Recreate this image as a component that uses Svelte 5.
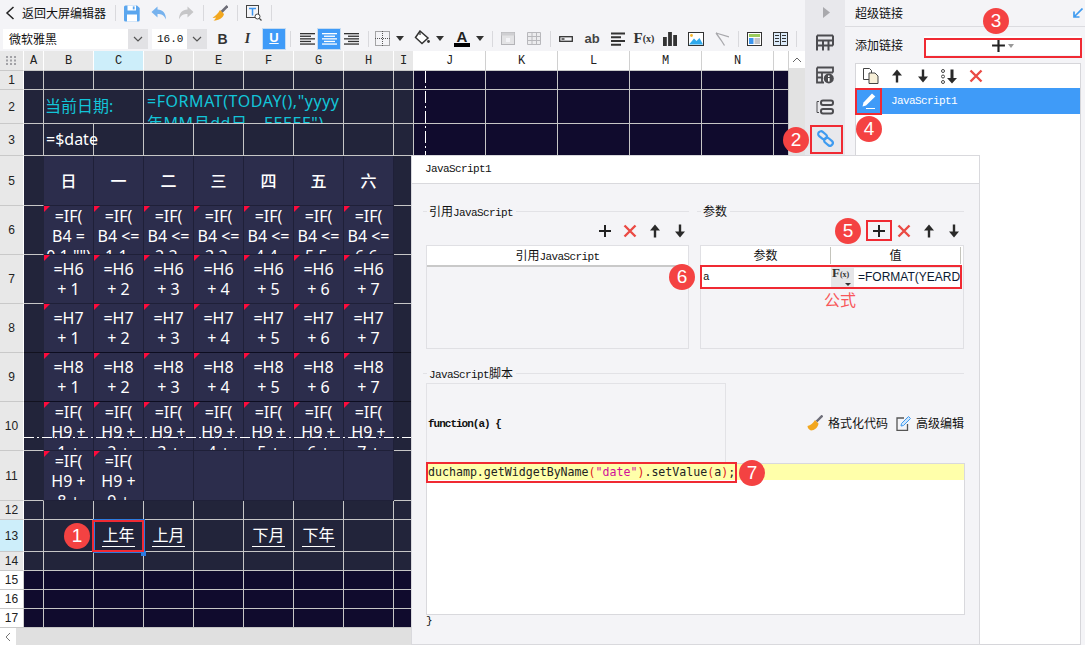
<script lang="ts">
	const colNames = ['A', 'B', 'C', 'D', 'E', 'F', 'G', 'H', 'I', 'J', 'K', 'L', 'M', 'N', ''];
	const rowNames = [1, 2, 3, 5, 6, 7, 8, 9, 10, 11, 12, 13, 14, 15, 16, 17];
	const weekdays = ['日', '一', '二', '三', '四', '五', '六'];
	const bottomLinks: Record<number, string> = { 2: '上年', 3: '上月', 5: '下月', 6: '下年' };

	type Cell = { key: string; cls: string; lines: string[]; mark: boolean };

	function calLines(row: number, k: number): string[] {
		if (row === 5) return [weekdays[k - 1]];
		if (row === 6) return k === 1 ? ['=IF(', 'B4 =', '0,1,"")'] : ['=IF(', 'B4 <=', `${k - 1},${k - 1},`];
		if (row === 7) return ['=H6', `+ ${k}`];
		if (row === 8) return ['=H7', `+ ${k}`];
		if (row === 9) return ['=H8', `+ ${k}`];
		if (row === 10) return ['=IF(', 'H9 +', `${k} +`];
		if (k <= 2) return ['=IF(', 'H9 +', `${k + 7} +`];
		return [];
	}

	function rowCells(row: number): Cell[] {
		const out: Cell[] = [];
		for (let i = 0; i < 15; i++) {
			const key = `${row}-${i}`;
			if (row === 2 && (i === 2 || (i >= 4 && i <= 6))) continue;
			let cls = i >= 9 || row >= 15 ? 'cell deep' : 'cell';
			let lines: string[] = [];
			let mark = false;
			if (row === 2 && i === 1) {
				cls += ' span2 cyan label';
				lines = ['当前日期:'];
			} else if (row === 2 && i === 3) {
				cls += ' span4 cyan formula';
				lines = ['=FORMAT(TODAY(),"yyyy', '年MM月dd日，EEEEE")'];
			} else if (row === 3 && i === 1) {
				cls += ' date';
				lines = ['=$date'];
			} else if (row >= 5 && row <= 11 && i >= 1 && i <= 7) {
				lines = calLines(row, i);
				mark = row > 5 && lines.length > 0;
				cls += ' cal';
				if (row === 5) cls += ' weekday';
				if (row === 8 || row === 9) cls += ' heavy';
				if (lines.length === 3) cls += ' top';
			} else if (row >= 5 && row <= 11 && (i === 0 || i === 8)) {
				cls += row === 8 || row === 9 ? ' side dim' : ' side';
			} else if (row === 13 && bottomLinks[i]) {
				cls += ' link';
				lines = [bottomLinks[i]];
			}
			out.push({ key, cls, lines, mark });
		}
		return out;
	}

	const redBoxes = [
		{ x: 92, y: 520, w: 52, h: 32 },
		{ x: 810, y: 125, w: 33, h: 29 },
		{ x: 924, y: 38, w: 158, h: 20 },
		{ x: 855, y: 88, w: 27, h: 27 },
		{ x: 866, y: 220, w: 26, h: 21 },
		{ x: 700, y: 265, w: 262, h: 24 },
		{ x: 426, y: 462, w: 311, h: 21 }
	];

	const badges = [
		{ n: 1, x: 77, y: 536 },
		{ n: 2, x: 796, y: 140 },
		{ n: 3, x: 996, y: 21 },
		{ n: 4, x: 869, y: 129 },
		{ n: 5, x: 848, y: 231 },
		{ n: 6, x: 682, y: 277 },
		{ n: 7, x: 752, y: 473 }
	];
</script>

{#snippet plus(s = 14)}
	<svg width={s} height={s} viewBox="0 0 14 14"><path d="M7 1v12M1 7h12" stroke="#222" stroke-width="2" /></svg>
{/snippet}

{#snippet cross()}
	<svg width="14" height="14" viewBox="0 0 14 14"><path d="M1.5 1.5l11 11M12.5 1.5l-11 11" stroke="#ea4a44" stroke-width="2.4" /></svg>
{/snippet}

{#snippet up()}
	<svg width="12" height="14" viewBox="0 0 12 14"><path d="M6 0.5L11 6.5H7.2V13.5H4.8V6.5H1Z" fill="#2a2a2a" /></svg>
{/snippet}

{#snippet down()}
	<svg width="12" height="14" viewBox="0 0 12 14"><path d="M6 13.5L11 7.5H7.2V0.5H4.8V7.5H1Z" fill="#2a2a2a" /></svg>
{/snippet}

{#snippet caret()}
	<svg width="8" height="5" viewBox="0 0 8 5"><path d="M0 0h8L4 5Z" fill="#333" /></svg>
{/snippet}

{#snippet chevron()}
	<svg width="10" height="6" viewBox="0 0 10 6"><path d="M1 1l4 4 4-4" fill="none" stroke="#555" stroke-width="1.2" /></svg>
{/snippet}

<div class="app">
	<div class="main">
		<div class="bar-top">
			<svg class="back" width="10" height="14" viewBox="0 0 10 14"><path d="M8.5 1L2 7l6.5 6" fill="none" stroke="#222" stroke-width="1.5" /></svg>
			<span class="back-label">返回大屏编辑器</span>
			<i class="sep"></i>
			<div class="top-group">
				<svg width="16" height="17" viewBox="0 0 16 17"><path d="M1.5 0.5H13L15.7 3V15a1.5 1.5 0 0 1-1.5 1.5H1.5A1.5 1.5 0 0 1 0 15V2A1.5 1.5 0 0 1 1.5 0.5Z" fill="#5ba6ee" /><rect x="3.5" y="0.5" width="8.5" height="5" fill="#fff" /><rect x="8.8" y="1.4" width="1.8" height="3" fill="#5ba6ee" /><rect x="3" y="9.5" width="10" height="7" fill="#fff" /></svg>
				<svg width="16" height="14" viewBox="0 0 16 14"><path d="M6.5 0.5L0.5 6l6 5.5V8c4 0 6.500 1 8.500 5.500C15 7 11.500 3.500 6.500 3.500Z" fill="#76b2ee" /></svg>
				<svg width="16" height="14" viewBox="0 0 16 14"><path d="M9.500 0.500L15.500 6l-6 5.500V8c-4 0-6.500 1-8.500 5.500C1 7 4.500 3.500 9.500 3.500Z" fill="#c6c6c8" /></svg>
			</div>
			<i class="sep"></i>
			<svg width="16" height="16" viewBox="0 0 16 16"><path d="M15.500 1L9.500 7" stroke="#6d6d78" stroke-width="2.600" /><path d="M8 5L12 9C11 13 7 15.500 1.500 15.500 3 14.500 4 13 4 12.500 3 13 1.500 13 0.500 12.800 3.500 11 6 8.500 8 5Z" fill="#f2a71f" /></svg>
			<i class="sep"></i>
			<svg width="16" height="16" viewBox="0 0 16 16"><rect x="0.500" y="0.500" width="12" height="12" fill="none" stroke="#444" /><path d="M3 3.500h7M6.500 3.500v7" stroke="#3d95ee" stroke-width="1.500" /><circle cx="11.500" cy="11.500" r="2.500" fill="#fff" stroke="#444" /><path d="M13.300 13.300L15.500 15.500" stroke="#444" stroke-width="1.200" /></svg>
			<i class="sep"></i>
		</div>

		<div class="bar-format">
			<div class="select font-select"><span class="value">微软雅黑</span><span class="drop">{@render chevron()}</span></div>
			<div class="select size-select"><span class="value mono">16.0</span><span class="drop">{@render chevron()}</span></div>
			<span class="slot b-slot">B</span>
			<span class="slot i-slot">I</span>
			<span class="u-slot">U</span>
			<i class="sep sep-a"></i>
			{#each [0, 1, 2] as a}
				<span class="align" class:on={a === 1}>
					<svg width="15" height="12" viewBox="0 0 15 12">
						{#each [0, 1, 2, 3, 4] as l}
							{@const w = l % 2 ? 11 : 15}
							<rect x={a === 0 ? 0 : a === 1 ? (15 - w) / 2 : 15 - w} y={l * 2.6} width={w} height="1.300" fill={a === 1 ? '#fff' : '#333'} />
						{/each}
					</svg>
				</span>
			{/each}
			<i class="sep sep-b"></i>
			<span class="tool-slot">
				<svg width="15" height="15" viewBox="0 0 15 15"><rect x="0.500" y="0.500" width="14" height="14" fill="none" stroke="#555" stroke-dasharray="1 1" /><path d="M7.500 0v15M0 7.500h15" stroke="#555" stroke-dasharray="1 1" /></svg>
			</span>
			<span class="caret-slot">{@render caret()}</span>
			<span class="tool-slot gap">
				<svg width="16" height="17" viewBox="0 0 16 17"><path d="M6 1L14 8 8 13.500 1.500 7.500Z" fill="#fff" stroke="#333" stroke-width="1.500" /><path d="M6 1v4" stroke="#333" stroke-width="1.200" /><circle cx="14.500" cy="11.500" r="1.400" fill="#333" /></svg>
			</span>
			<span class="caret-slot">{@render caret()}</span>
			<span class="tool-slot gap font-color">
				<span class="a-letter">A</span>
				<span class="a-bar"></span>
			</span>
			<span class="caret-slot">{@render caret()}</span>
			<i class="sep sep-c"></i>
			<span class="wide-slot">
				<svg width="14" height="13" viewBox="0 0 14 13"><rect x="0.500" y="0.500" width="13" height="12" fill="#e3e3e5" stroke="#b4b4b8" /><rect x="0.500" y="0.500" width="13" height="3" fill="#cfcfd2" /><rect x="5" y="6" width="4" height="4" fill="#f4f4f7" /></svg>
			</span>
			<span class="wide-slot">
				<svg width="14" height="13" viewBox="0 0 14 13"><path d="M0.500 0.500h13v12h-13zM0.500 4.500h13M0.500 8.500h13M5 0.500v12M9.500 0.500v12" fill="#ececee" stroke="#b8b8bc" /></svg>
			</span>
			<i class="sep sep-d"></i>
			<span class="wide-slot">
				<svg width="14" height="6" viewBox="0 0 14 6"><rect x="0.700" y="0.700" width="12.600" height="4.600" fill="none" stroke="#333" stroke-width="1.300" /><rect x="2.500" y="2.300" width="3" height="1.400" fill="#333" /></svg>
			</span>
			<span class="wide-slot ab">ab</span>
			<span class="wide-slot">
				<svg width="14" height="14" viewBox="0 0 14 14"><path d="M0 1.500h14M0 5.300h10M0 9h14M0 12.700h10" stroke="#333" stroke-width="1.900" /></svg>
			</span>
			<span class="wide-slot fx">F<small>(x)</small></span>
			<span class="wide-slot">
				<svg width="14" height="14" viewBox="0 0 14 14"><path d="M0 5h3.800v9H0zM5.100 0h3.800v14H5.100zM10.200 3H14v11h-3.800z" fill="#333" /></svg>
			</span>
			<span class="wide-slot">
				<svg width="16" height="14" viewBox="0 0 16 14"><rect x="0.500" y="0.500" width="15" height="13" fill="#fff" stroke="#333" /><path d="M1 12.500L6 6.500l2.500 2.500 3-3L15 12.500Z" fill="#2ea9ec" /><circle cx="3.500" cy="3.500" r="1.400" fill="#f5b52c" /></svg>
			</span>
			<span class="wide-slot">
				<svg width="14" height="14" viewBox="0 0 14 14"><path d="M1 1L14 5M1 1L6 8L9.500 13.500" fill="none" stroke="#a8a8ac" stroke-width="1.300" /></svg>
			</span>
			<i class="sep sep-d"></i>
			<span class="wide-slot">
				<svg width="15" height="14" viewBox="0 0 15 14"><rect x="0.500" y="0.500" width="14" height="13" fill="#fff" stroke="#333" /><rect x="2" y="2" width="11" height="3" fill="#9ccb5c" /><rect x="2" y="6" width="4.500" height="6" fill="#3d95ee" /><rect x="7.500" y="6" width="5.500" height="6" fill="#c4c4c8" /></svg>
			</span>
			<span class="wide-slot">
				<svg width="15" height="14" viewBox="0 0 15 14"><rect x="0.500" y="0.500" width="14" height="13" fill="#dcebfa" stroke="#333" /><path d="M7.500 0.500v13M2 3.500h4M2 6.500h4M2 9.500h4M9 3.500h4M9 6.500h4M9 9.500h4" stroke="#333" /></svg>
			</span>
			<i class="sep sep-d"></i>
		</div>

		<div class="sheet-wrap">
			<div class="sheet">
				<div class="corner">
					<svg width="11" height="9" viewBox="0 0 11 9">
						{#each [0, 4, 8] as x}
							{#each [0, 3.500, 7] as y}
								<rect {x} {y} width="2" height="2" fill="#a2a2a6" />
							{/each}
						{/each}
					</svg>
				</div>
				{#each colNames as name, i}
					<div class="col-head" class:white={i >= 9} class:picked={name === 'C'}>{name}</div>
				{/each}

				{#each rowNames as row}
					<div class="row-head" class:white={row >= 15} class:picked={row === 13}>{row}</div>
					{#each rowCells(row) as cell (cell.key)}
						<div class={cell.cls}>
							{#if cell.mark}<i class="mark"></i>{/if}
							{#if cell.cls.includes('link')}
								<span class="link-text">{cell.lines[0]}</span>
							{:else}
								{#each cell.lines as line}
									<span class="line">{line}</span>
								{/each}
							{/if}
						</div>
					{/each}
				{/each}
			</div>
			<div class="vscroll"><span class="vscroll-up"><svg width="10" height="6" viewBox="0 0 10 6"><path d="M1 5l4-4 4 4" fill="none" stroke="#666" /></svg></span></div>
		</div>

		<div class="hscroll">
			<span class="hscroll-left"><svg width="6" height="10" viewBox="0 0 6 10"><path d="M5 1L1 5l4 4" fill="none" stroke="#777" /></svg></span>
		</div>
	</div>

	<aside class="rail">
		<svg class="rail-arrow" width="7" height="11" viewBox="0 0 7 11"><path d="M0 0l7 5.500L0 11Z" fill="#a9a9ad" /></svg>
		<svg class="rail-icon" width="18" height="18" viewBox="0 0 18 18"><path d="M1 1.500h16M1 1.500v15M1 6.500h16M1 11.500h16M7 6.500v10M12.500 6.500v10M17 1.500v10" fill="none" stroke="#4c4c50" stroke-width="2" /></svg>
		<svg class="rail-icon tight" width="18" height="18" viewBox="0 0 18 18"><path d="M1 1.500h16v5M1 1.500v15h7M1 6.500h16M1 11.500h6M6 6.500v10" fill="none" stroke="#4c4c50" stroke-width="1.800" /><circle cx="12.800" cy="12.500" r="5" fill="#4c4c50" /><rect x="12" y="12" width="1.600" height="3.500" fill="#fff" /><rect x="12" y="9.500" width="1.600" height="1.500" fill="#fff" /></svg>
		<svg class="rail-icon" width="18" height="16" viewBox="0 0 18 16"><path d="M3 2.500H1v11h2" fill="none" stroke="#4c4c50" /><rect x="5" y="1.500" width="12" height="4.500" rx="2" fill="none" stroke="#4c4c50" stroke-width="2" /><rect x="5" y="10" width="12" height="4.500" rx="2" fill="none" stroke="#4c4c50" stroke-width="2" /></svg>
		<svg class="rail-icon" width="17" height="17" viewBox="0 0 17 17"><rect x="0.800" y="2.500" width="9.500" height="5.500" rx="2.700" transform="rotate(40 5.500 5.200)" fill="none" stroke="#3f9bf0" stroke-width="2.200" /><rect x="6.700" y="9" width="9.500" height="5.500" rx="2.700" transform="rotate(40 11.500 11.700)" fill="none" stroke="#3f9bf0" stroke-width="2.200" /></svg>
	</aside>

	<aside class="panel">
		<header class="panel-head">
			<span>超级链接</span>
			<svg width="10" height="10" viewBox="0 0 10 10"><path d="M9.500 0.500L1.500 8.500M1 3.500v5.500h5.500" fill="none" stroke="#3f9bf0" stroke-width="1.700" /></svg>
		</header>
		<div class="add-row">
			<span class="add-label">添加链接</span>
			<div class="add-btn">
				{@render plus(15)}
				<svg width="6" height="4" viewBox="0 0 6 4"><path d="M0 0h6L3 4Z" fill="#999" /></svg>
			</div>
		</div>
		<div class="link-list">
			<div class="list-tools">
				<svg width="16" height="16" viewBox="0 0 16 16"><path d="M0.500 0.500h6l2 2v9h-8z" fill="#fff" stroke="#444" /><path d="M6 5h6l3 3v7.500H6z" fill="#f8f0d8" stroke="#444" /></svg>
				{@render up()}
				<span class="down-gap">{@render down()}</span>
				<svg width="16" height="15" viewBox="0 0 16 15"><path d="M11 14.500L16 9h-3.500V0.500h-3V9H6Z" fill="#2a2a2a" /><circle cx="2" cy="2" r="1.500" fill="none" stroke="#444" /><circle cx="2" cy="7.500" r="1.500" fill="none" stroke="#444" /><circle cx="2" cy="13" r="1.500" fill="none" stroke="#444" /></svg>
				{@render cross()}
			</div>
			<div class="list-row">
				<span class="pen">
					<svg width="15" height="16" viewBox="0 0 15 16"><path d="M11 0.500L14.300 3.500 5 12.500 1.500 13.500 2.500 9.500Z" fill="#fff" /><path d="M5 15.500h9" stroke="#fff" /></svg>
				</span>
				<span class="mono list-name">JavaScript1</span>
			</div>
		</div>
	</aside>

	<section class="dialog">
		<div class="dialog-title mono">JavaScript1</div>
		<div class="dialog-body">
			<div class="two-cols">
				<div>
					<div class="legend"><span>引用<b class="mono">JavaScript</b></span></div>
					<div class="mini-tools left-tools">
						<span>{@render plus()}</span><span>{@render cross()}</span><span>{@render up()}</span><span>{@render down()}</span>
					</div>
					<div class="grid-box">
						<div class="grid-head ref-head"><span>引用<b class="mono">JavaScript</b></span></div>
					</div>
				</div>
				<div>
					<div class="legend"><span>参数</span></div>
					<div class="mini-tools right-tools">
						<span>{@render plus()}</span><span>{@render cross()}</span><span>{@render up()}</span><span>{@render down()}</span>
					</div>
					<div class="grid-box">
						<div class="grid-head params-head"><span>参数</span><span>值</span></div>
						<div class="param-row">
							<span class="param-name">a</span>
							<span class="param-fx">F<small>(x)</small><svg width="6" height="3" viewBox="0 0 6 3"><path d="M0 0h6L3 3Z" fill="#333" /></svg></span>
							<span class="param-value">=FORMAT(YEARD</span>
						</div>
						<p class="formula-note">公式</p>
					</div>
				</div>
			</div>

			<div class="legend script-legend"><span><b class="mono">JavaScript</b>脚本</span></div>
			<div class="script-top">
				<div class="fn-box mono">function(a) {'{'}</div>
				<div class="script-actions">
					<svg width="16" height="16" viewBox="0 0 16 16"><path d="M15.500 0.500L9.500 6.500" stroke="#6d6d78" stroke-width="2.400" /><path d="M8 5L11.500 8.500C11 12.500 7.500 15.500 4 15.500 2 15 0.500 13 0.500 11 3.500 10.500 6 8 8 5Z" fill="#f2a71f" /></svg>
					<span>格式化代码</span>
					<svg class="edit-icon" width="15" height="15" viewBox="0 0 15 15"><path d="M8 2H1v12.500h10.500V8" fill="none" stroke="#555" stroke-width="1.300" /><path d="M12.500 0.500L14.500 2.500 7.500 9.500 5 10l.5-2.500Z" fill="#cfe5fb" stroke="#3f9bf0" /></svg>
					<span>高级编辑</span>
				</div>
			</div>
			<div class="editor">
				<div class="code-line"><span>duchamp.getWidgetByName</span><span class="red">(</span><span class="pink">"date"</span><span class="red">)</span><span>.setValue</span><span class="red">(</span><span>a</span><span class="red">)</span><span>;</span><i class="cursor"></i></div>
			</div>
			<div class="closing mono">{'}'}</div>
		</div>
	</section>

	<svg class="dash-layer" width="1085" height="645">
		<path d="M425.500 71V155" stroke="#fff" stroke-dasharray="12 3 2 3" />
		<path d="M24 437.500H411" stroke="#fff" stroke-dasharray="10 3 2 3" />
	</svg>

	<i class="selection"></i>
	<i class="selection-handle"></i>

	{#each redBoxes as b}
		<i class="red-box" style="left:{b.x}px;top:{b.y}px;width:{b.w}px;height:{b.h}px"></i>
	{/each}
	{#each badges as b}
		<b class="badge" style="left:{b.x - 13}px;top:{b.y - 13}px">{b.n}</b>
	{/each}
</div>

<style>
	:global(body) {
		margin: 0;
		background: #fff;
	}

	.app {
		position: relative;
		display: flex;
		width: 1085px;
		height: 645px;
		overflow: hidden;
		background: #f4f4f7;
		color: #111;
		font-family: 'Noto Sans', 'Noto Sans CJK SC', sans-serif;
		font-size: 12px;
	}

	.mono {
		font-family: 'Liberation Mono', 'Noto Sans CJK SC', monospace;
		font-size: 11px;
		letter-spacing: -0.6px;
		font-weight: 400;
	}

	.main {
		display: flex;
		flex-direction: column;
		flex: 0 0 805px;
		width: 805px;
		height: 645px;
	}

	.sep {
		flex: none;
		width: 1px;
		height: 16px;
		background: #d9d9dd;
		margin: 0 8px 0 9px;
	}

	.bar-top {
		display: flex;
		align-items: center;
		height: 26px;
		padding-left: 5px;
	}

	.back {
		flex: none;
	}

	.back-label {
		margin-left: 7px;
		width: 84px;
		font-size: 12px;
		white-space: nowrap;
	}

	.top-group {
		display: flex;
		align-items: center;
		gap: 11px;
	}

	.bar-format {
		display: flex;
		align-items: center;
		height: 25px;
		padding-left: 3px;
	}

	.select {
		display: flex;
		flex: none;
		height: 20px;
		background: #e2e2e5;
	}

	.select .value {
		display: flex;
		align-items: center;
		background: #fff;
		padding-left: 6px;
		box-sizing: border-box;
	}

	.select .drop {
		display: flex;
		flex: 1;
		align-items: center;
		justify-content: center;
	}

	.font-select {
		width: 145px;
	}

	.font-select .value {
		width: 125px;
		font-size: 12px;
	}

	.size-select {
		width: 55px;
		margin-left: 4px;
	}

	.size-select .value {
		width: 35px;
		padding-left: 5px;
		font-size: 11px;
		letter-spacing: 0;
	}

	.slot {
		flex: none;
		width: 25px;
		text-align: center;
		font-family: 'Liberation Serif', serif;
		font-size: 14px;
		font-weight: 700;
		color: #333;
	}

	.b-slot {
		margin-left: 3px;
		font-family: 'Liberation Sans', sans-serif;
	}

	.i-slot {
		font-style: italic;
	}

	.u-slot {
		flex: none;
		width: 22px;
		height: 20px;
		margin-left: 3px;
		background: #3f9bf8;
		color: #fff;
		text-align: center;
		font: 700 13px/18px 'Liberation Sans', sans-serif;
		text-decoration: underline;
		outline: 1px solid #c6dcf2;
	}

	.sep-a {
		margin: 0 5px;
	}

	.sep-b {
		margin: 0 0 0 6px;
	}

	.sep-c {
		margin: 0 2px 0 7px;
	}

	.sep-d {
		margin: 0 2px 0 3px;
	}

	.align {
		display: flex;
		flex: none;
		width: 22px;
		height: 20px;
		align-items: center;
		justify-content: center;
	}

	.align.on {
		background: #3f9bf8;
		outline: 1px solid #c6dcf2;
	}

	.tool-slot {
		position: relative;
		display: flex;
		flex: none;
		width: 26px;
		height: 22px;
		align-items: center;
		justify-content: center;
	}

	.tool-slot.gap {
		margin-left: 4px;
	}

	.caret-slot {
		display: flex;
		flex: none;
		width: 10px;
		justify-content: center;
	}

	.font-color {
		flex-direction: column;
	}

	.a-letter {
		font: 700 15px/13px 'Liberation Sans', sans-serif;
		color: #222;
	}

	.a-bar {
		width: 16px;
		height: 4px;
		background: #000;
	}

	.wide-slot {
		display: flex;
		flex: none;
		width: 26px;
		align-items: center;
		justify-content: center;
	}

	.ab {
		font: 700 13px 'Liberation Sans', sans-serif;
		color: #444;
	}

	.fx {
		font: 700 15px 'Liberation Serif', serif;
		color: #333;
	}

	.fx small {
		font-size: 10px;
	}

	.sheet-wrap {
		display: flex;
		height: 577px;
	}

	.sheet {
		display: grid;
		flex: 0 0 789px;
		grid-template-columns: 24px 20px repeat(7, 50px) 20px repeat(5, 72px) 15px;
		grid-template-rows: 20px 19px 34px 32px 50px 49px 49px 49px 49px 49px 50px 19px 32px 19px 19px 19px 19px;
	}

	.corner,
	.col-head,
	.row-head {
		display: flex;
		align-items: center;
		justify-content: center;
		box-sizing: border-box;
		background: #e8e8e8;
		color: #222;
		border-right: 1px solid #fff;
		border-bottom: 1px solid #c9c9c9;
	}

	.col-head {
		font: 12px 'Liberation Mono', monospace;
	}

	.row-head {
		font: 12px 'Liberation Sans', sans-serif;
	}

	.white {
		background: #fff;
		border-right-color: #d0d0d0;
	}

	.picked {
		background: #cdeefa;
	}

	.cell {
		position: relative;
		box-sizing: border-box;
		min-width: 0;
		background: #22243a;
		border-right: 1px solid #c6c6c6;
		border-bottom: 1px solid #c6c6c6;
		color: #fff;
		font-size: 16px;
		line-height: 20px;
	}

	.deep {
		background: #100b2d;
	}

	.span2 {
		grid-column: span 2;
	}

	.span4 {
		grid-column: span 4;
	}

	.cyan {
		color: #12c4d8;
	}

	.label {
		display: flex;
		align-items: center;
		padding: 0 0 1px 1px;
	}

	.formula {
		overflow: hidden;
		padding: 0 0 0 3px;
		line-height: 22px;
		letter-spacing: 0.55px;
		white-space: nowrap;
	}

	.formula .line {
		display: block;
	}

	.date {
		display: flex;
		align-items: center;
		padding: 0 0 1px 2px;
		white-space: nowrap;
		overflow: visible;
		z-index: 1;
	}

	.cal {
		display: flex;
		flex-direction: column;
		justify-content: center;
		align-items: center;
		overflow: hidden;
		background: #2c2d4c;
		border-right: 1px solid #1f2038;
		border-bottom: 1px solid #1f2038;
		white-space: nowrap;
	}

	.cal .line {
		flex: none;
		height: 20px;
	}

	.cal.top {
		justify-content: flex-start;
	}

	.cal.heavy {
		border-bottom-color: #0d0d20;
	}

	.weekday {
		font-weight: 500;
	}

	.side {
		border-right-color: #22243a;
		border-bottom-color: #c6c6c6;
	}

	.side.dim {
		border-bottom-color: #12121f;
	}

	.mark {
		position: absolute;
		top: 0;
		left: 0;
		width: 6px;
		height: 6px;
		background: #ff0a3c;
		clip-path: polygon(0 0, 100% 0, 0 100%);
	}

	.link {
		display: flex;
		align-items: center;
		justify-content: center;
	}

	.link-text {
		display: block;
		width: 33px;
		height: 21px;
		line-height: 20px;
		margin-top: 1px;
		text-align: center;
		border-bottom: 1px solid #fff;
	}

	.vscroll {
		flex: 0 0 16px;
		background: #e2e2e2;
	}

	.vscroll-up {
		display: flex;
		height: 17px;
		align-items: center;
		justify-content: center;
		background: #fff;
	}

	.hscroll {
		display: flex;
		height: 17px;
		background: #e0e0e0;
	}

	.hscroll-left {
		display: flex;
		width: 16px;
		align-items: center;
		justify-content: center;
		background: #fff;
	}

	.rail {
		display: flex;
		flex: 0 0 40px;
		flex-direction: column;
		align-items: center;
		padding-top: 7px;
		box-sizing: border-box;
		background: #e8e8ec;
	}

	.rail-arrow {
		margin-left: 2px;
		margin-bottom: 1px;
	}

	.rail-icon {
		margin-top: 15px;
	}

	.rail-icon.tight {
		margin-top: 14px;
	}

	.panel {
		display: flex;
		flex: 1;
		flex-direction: column;
		min-width: 0;
	}

	.panel-head {
		display: flex;
		flex: none;
		align-items: center;
		justify-content: space-between;
		height: 26px;
		padding: 0 2px 0 10px;
		border-bottom: 1px solid #dcdce0;
	}

	.add-row {
		display: flex;
		flex: none;
		align-items: center;
		height: 36px;
		padding-left: 10px;
	}

	.add-label {
		width: 69px;
	}

	.add-btn {
		display: flex;
		flex: 1;
		align-items: center;
		justify-content: center;
		gap: 2px;
		margin: 1px 4px 0 0;
		height: 19px;
		background: #fff;
	}

	.link-list {
		flex: 1;
		margin: 0 4px 0 10px;
		border: 1px solid #d6d6da;
		background: #fff;
	}

	.list-tools {
		display: flex;
		align-items: center;
		gap: 12px;
		height: 24px;
		padding-left: 7px;
	}

	.down-gap {
		display: flex;
		margin-left: 2px;
	}

	.list-row {
		display: flex;
		align-items: center;
		height: 26px;
		background: #3f9bf8;
		color: #fff;
	}

	.pen {
		display: flex;
		flex: 0 0 25px;
		align-items: center;
		justify-content: center;
	}

	.list-name {
		margin-left: 10px;
	}

	.dialog {
		position: absolute;
		left: 411px;
		top: 155px;
		box-sizing: border-box;
		width: 569px;
		height: 490px;
		border: 1px solid #d9d9dd;
		background: #f4f4f7;
	}

	.dialog-title {
		height: 27px;
		padding-left: 13px;
		line-height: 27px;
		background: #fff;
		border-bottom: 1px solid #d9d9dd;
	}

	.dialog-body {
		padding: 20px 15px 0 14px;
	}

	.two-cols {
		display: grid;
		grid-template-columns: 263px 264px;
		gap: 11px;
	}

	.legend {
		display: flex;
		align-items: center;
		height: 14px;
		margin-left: -3px;
	}

	.legend::before {
		content: '';
		flex: 0 0 4px;
		height: 1px;
		background: #e2e2e6;
		margin-right: 2px;
	}

	.legend::after {
		content: '';
		flex: 1;
		height: 1px;
		background: #e2e2e6;
		margin-left: 3px;
	}

	.legend b,
	.ref-head b {
		font-weight: 400;
	}

	.mini-tools {
		display: flex;
		justify-content: flex-end;
		height: 20px;
		margin-top: 3px;
	}

	.mini-tools span {
		display: flex;
		flex: 0 0 25px;
		align-items: center;
		justify-content: center;
	}

	.left-tools {
		margin-right: -3px;
	}

	.right-tools {
		margin-right: -2px;
	}

	.grid-box {
		box-sizing: border-box;
		height: 104px;
		margin-top: 4px;
		border: 1px solid #e0e0e4;
	}

	.grid-head {
		display: flex;
		box-sizing: border-box;
		height: 21px;
		background: #fff;
		text-align: center;
		line-height: 19px;
	}

	.ref-head {
		justify-content: center;
		border-bottom: 2px solid #c9c9c9;
	}

	.params-head {
		height: 20px;
	}

	.params-head span {
		box-sizing: border-box;
		flex: 0 0 130px;
		border-right: 1px solid #c4c4bc;
		height: 17px;
		margin-top: 1px;
		line-height: 17px;
	}

	.param-row {
		display: flex;
		align-items: center;
		height: 22px;
		margin-right: 1px;
		background: #e6e6e8;
	}

	.param-name {
		flex: 0 0 130px;
		box-sizing: border-box;
		padding-left: 2px;
		height: 22px;
		background: #fff;
		font: 400 11px/22px 'Liberation Mono', monospace;
	}

	.param-fx {
		position: relative;
		flex: 0 0 23px;
		height: 22px;
		font: 700 13px/13px 'Liberation Serif', serif;
		color: #333;
		padding-left: 1px;
		box-sizing: border-box;
	}

	.param-fx small {
		font-size: 8px;
	}

	.param-fx svg {
		position: absolute;
		left: 14px;
		bottom: 2px;
	}

	.param-value {
		flex: 1;
		height: 19px;
		min-width: 0;
		padding-left: 4px;
		overflow: hidden;
		background: #fff;
		color: #0b1a33;
		font: 12px/19px 'Liberation Sans', sans-serif;
		white-space: nowrap;
	}

	.formula-note {
		margin: 1px 0 0;
		padding-left: 123px;
		font-size: 16px;
		line-height: 22px;
		color: #f8575a;
	}

	.script-legend {
		margin-top: 17px;
	}

	.script-top {
		display: flex;
		justify-content: space-between;
		align-items: center;
		width: 539px;
		margin-top: 3px;
	}

	.fn-box {
		display: flex;
		align-items: center;
		box-sizing: border-box;
		width: 300px;
		height: 80px;
		padding-left: 1px;
		border: 1px solid #e2e2e6;
		border-bottom: 0;
		letter-spacing: -1px;
		font-weight: 700;
	}

	.script-actions {
		display: flex;
		align-items: center;
		color: #111;
		padding-right: 1px;
	}

	.script-actions span {
		margin-left: 5px;
	}

	.edit-icon {
		margin-left: 8px;
	}

	.editor {
		box-sizing: border-box;
		width: 539px;
		height: 152px;
		border: 1px solid #d9d9dd;
		background: #fff;
	}

	.code-line {
		display: flex;
		height: 16px;
		align-items: center;
		padding-left: 1px;
		background: #ffffaa;
		color: #222;
		font: 11.6px 'DejaVu Sans Mono', monospace;
		white-space: pre;
	}

	.red {
		color: #e0201c;
	}

	.pink {
		color: #d0109a;
	}

	.cursor {
		width: 1px;
		height: 14px;
		background: #000;
	}

	.closing {
		margin-top: -1px;
		height: 14px;
		line-height: 14px;
	}

	.dash-layer {
		position: absolute;
		left: 0;
		top: 0;
		pointer-events: none;
	}

	.selection {
		position: absolute;
		left: 93px;
		top: 519px;
		width: 52px;
		height: 34px;
		box-sizing: border-box;
		border: 2px solid #2c7be0;
	}

	.selection-handle {
		position: absolute;
		left: 141px;
		top: 551px;
		width: 5px;
		height: 5px;
		background: #2c7be0;
	}

	.red-box {
		position: absolute;
		box-sizing: border-box;
		border: 2px solid #f02a33;
	}

	.badge {
		position: absolute;
		display: flex;
		width: 26px;
		height: 26px;
		align-items: center;
		justify-content: center;
		border-radius: 50%;
		background: #f44242;
		color: #fff;
		font: 400 19px 'Liberation Sans', sans-serif;
	}
</style>
